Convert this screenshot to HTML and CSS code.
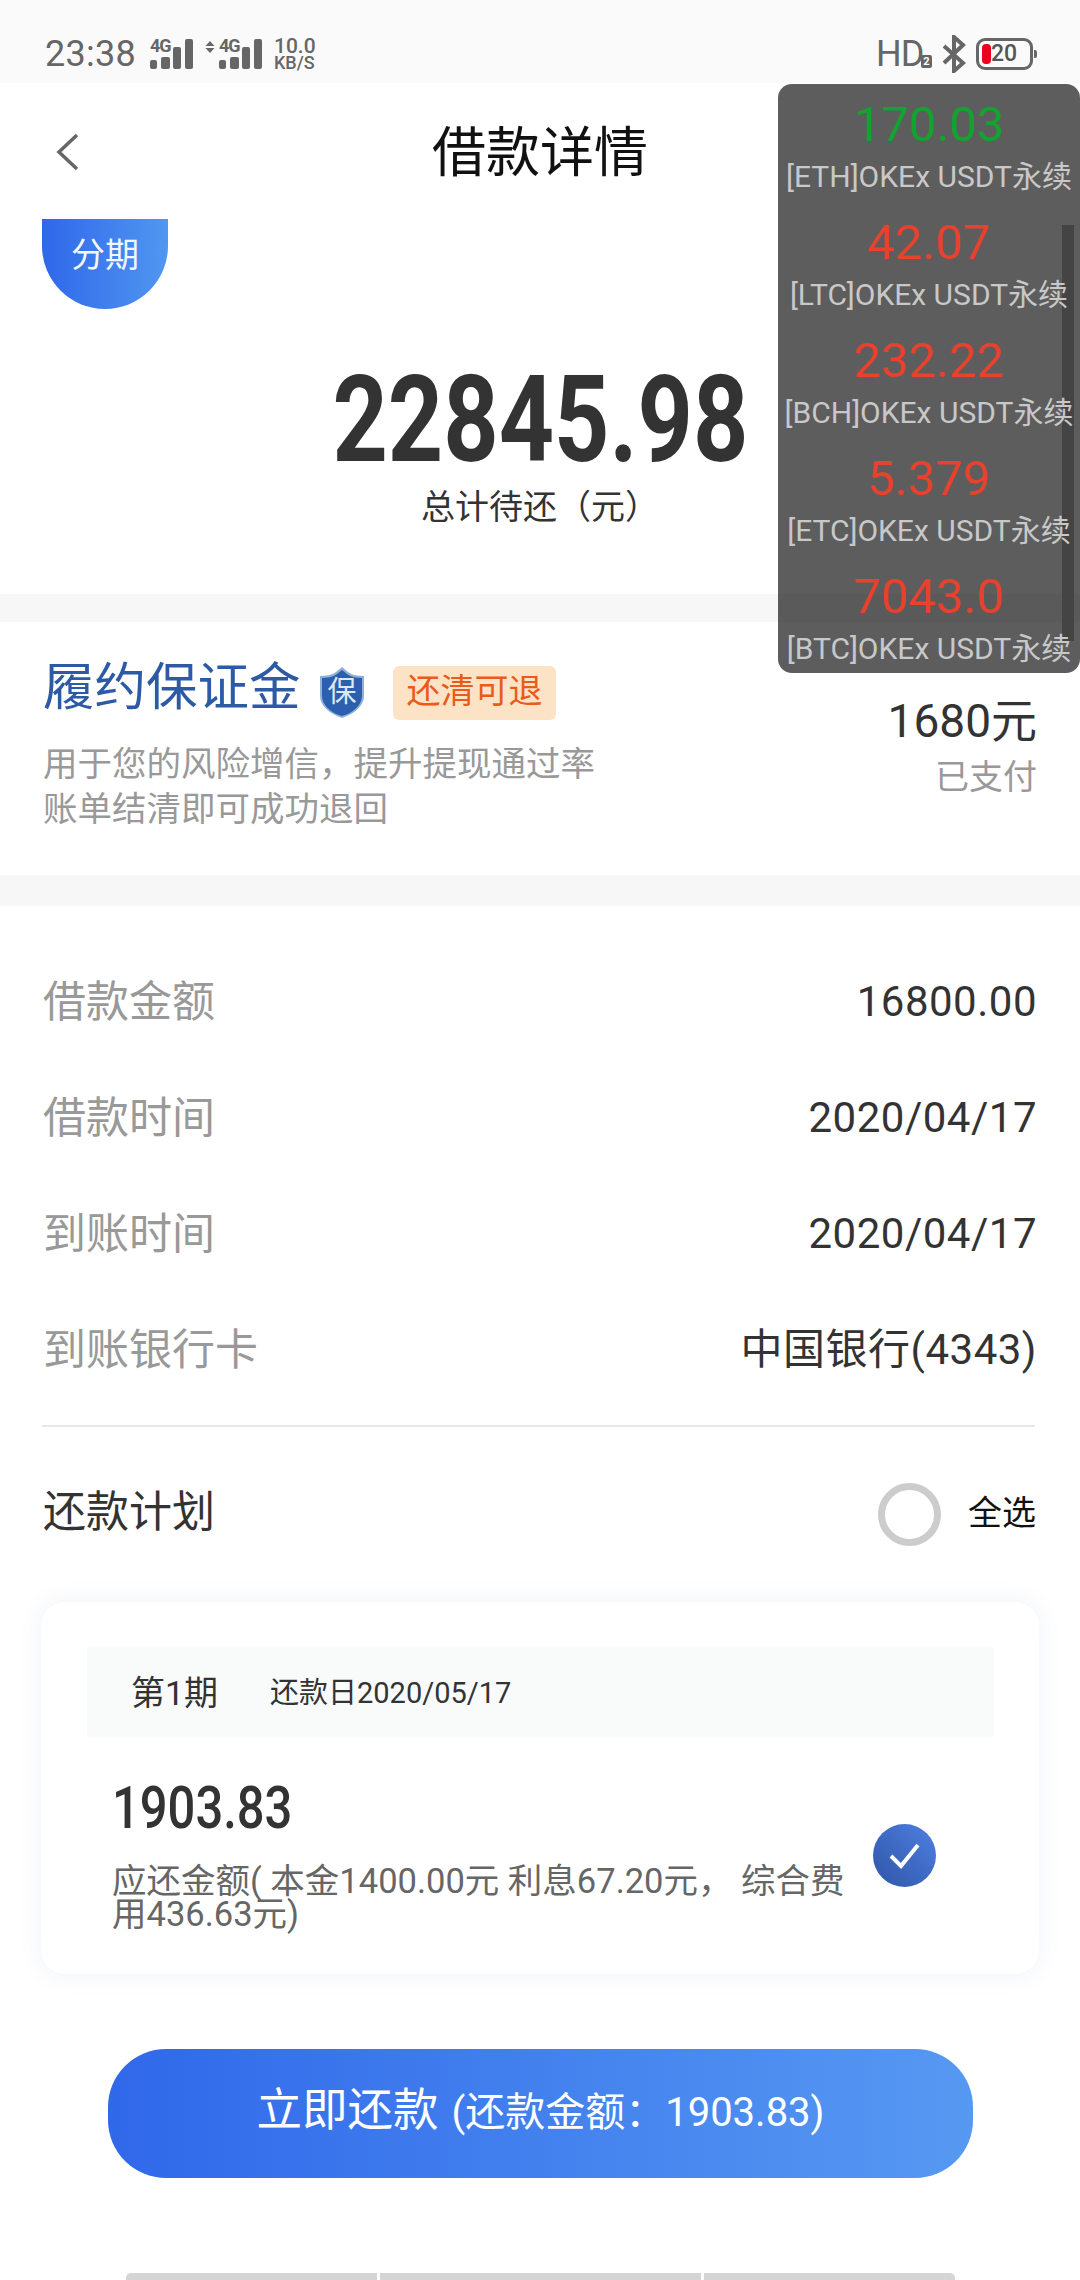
FILE: index.html
```html
<!DOCTYPE html>
<html lang="zh-CN">
<head>
<meta charset="utf-8">
<title>借款详情</title>
<link rel="stylesheet" href="styles.css">
</head>
<body>
<div class="page">
  <header class="status">
    <div class="status-left">
      <span class="time">23:38</span>
      <span class="sig"><span class="sig-g">4G</span>
        <svg class="bars" width="43" height="30" viewBox="0 0 43 30"><rect x="0" y="21" width="7" height="9" rx="2"/><rect x="11" y="18" width="9" height="12" rx="2"/><rect x="23" y="8" width="8" height="22" rx="2"/><rect x="35" y="0" width="8" height="30" rx="2"/></svg></span>
      <svg class="updown" width="10" height="12" viewBox="0 0 10 12"><path d="M5 0l4.500 5h-9zM5 12l4.500-5h-9z"/></svg>
      <span class="sig"><span class="sig-g">4G</span>
        <svg class="bars" width="43" height="30" viewBox="0 0 43 30"><rect x="0" y="21" width="7" height="9" rx="2"/><rect x="11" y="18" width="9" height="12" rx="2"/><rect x="23" y="8" width="8" height="22" rx="2"/><rect x="35" y="0" width="8" height="30" rx="2"/></svg></span>
      <span class="speed"><b>10.0</b><i>KB/S</i></span>
    </div>
    <div class="status-right">
      <span class="hd">HD<span class="hd-2">2</span></span>
      <svg class="bt" width="24" height="38" viewBox="0 0 24 38"><path d="M2 11l19 17-9 8V2l9 8L2 28" fill="none" stroke="#666" stroke-width="4"/></svg>
      <span class="battery"><span class="battery-fill"></span><span class="battery-num">20</span></span>
    </div>
  </header>

  <nav class="nav">
    <svg class="back" width="24" height="38" viewBox="0 0 24 38"><path d="M21 2L3 19l18 17" fill="none" stroke="#666" stroke-width="3.500"/></svg>
    <h1 class="title">借款详情</h1>
  </nav>

  <aside class="ticker">
    <div class="ticker-scroll"></div>
    <div class="ticker-row"><div class="ticker-val up">170.03</div><div class="ticker-name">[ETH]OKEx USDT永续</div></div>
    <div class="ticker-row"><div class="ticker-val down">42.07</div><div class="ticker-name">[LTC]OKEx USDT永续</div></div>
    <div class="ticker-row"><div class="ticker-val down">232.22</div><div class="ticker-name">[BCH]OKEx USDT永续</div></div>
    <div class="ticker-row"><div class="ticker-val down">5.379</div><div class="ticker-name">[ETC]OKEx USDT永续</div></div>
    <div class="ticker-row"><div class="ticker-val down">7043.0</div><div class="ticker-name">[BTC]OKEx USDT永续</div></div>
  </aside>

  <section class="summary">
    <div class="badge">分期</div>
    <div class="total"><span class="total-num">22845.98</span></div>
    <div class="total-label">总计待还（元）</div>
  </section>

  <div class="band band-a"></div>

  <section class="deposit">
    <div class="deposit-main">
      <div class="deposit-head">
        <span class="deposit-title">履约保证金</span>
        <svg class="shield" width="46" height="53" viewBox="0 0 46 53"><path d="M23 1l6 5c4 3 10 4 16 4v20c0 10-10 18-22 22C11 48 1 40 1 30V10c6 0 12-1 16-4z" fill="#8fb0dc"/><path d="M23 4l5 4c4 3 10 4 15 4v18c0 9-9 17-20 20C12 47 3 39 3 30V12c5 0 11-1 15-4z" fill="#2c5fae"/><text x="23" y="36" text-anchor="middle" class="shield-text">保</text></svg>
        <span class="deposit-tag">还清可退</span>
      </div>
      <p class="deposit-desc">用于您的风险增信，提升提现通过率<br>账单结清即可成功退回</p>
    </div>
    <div class="deposit-side">
      <div class="deposit-amount">1680元</div>
      <div class="deposit-state">已支付</div>
    </div>
  </section>

  <div class="band band-b"></div>

  <section class="details">
    <div class="row"><span class="row-label">借款金额</span><span class="row-value">16800.00</span></div>
    <div class="row"><span class="row-label">借款时间</span><span class="row-value">2020/04/17</span></div>
    <div class="row"><span class="row-label">到账时间</span><span class="row-value">2020/04/17</span></div>
    <div class="row"><span class="row-label">到账银行卡</span><span class="row-value">中国银行(4343)</span></div>
    <div class="divider"></div>
    <div class="plan">
      <span class="plan-title">还款计划</span>
      <span class="plan-all"><span class="radio"></span><span class="plan-all-text">全选</span></span>
    </div>
    <div class="card">
      <div class="card-head"><span class="period">第1期</span><span class="due">还款日2020/05/17</span></div>
      <div class="card-body">
        <div class="card-info">
          <div class="card-amount"><span class="card-num">1903.83</span></div>
          <p class="card-desc">应还金额( 本金1400.00元 利息67.20元， 综合费用436.63元)</p>
        </div>
        <svg class="check" width="63" height="63" viewBox="0 0 63 63"><defs><linearGradient id="cg" x1="0" y1="1" x2="1" y2="0"><stop offset="0" stop-color="#2f56a8"/><stop offset="1" stop-color="#4f7fe0"/></linearGradient></defs><circle cx="31.500" cy="31.500" r="31.500" fill="url(#cg)"/><path d="M18 32l10 10 17-21" fill="none" stroke="#fff" stroke-width="4"/></svg>
      </div>
    </div>
    <button class="pay"><span class="pay-main">立即还款</span><span class="pay-sub">(还款金额：1903.83)</span></button>
  </section>

  <div class="nav-hint"><span class="hint h1"></span><span class="hint h2"></span><span class="hint h3"></span></div>
</div>
</body>
</html>
```
FILE: styles.css
```css
* { box-sizing: border-box; }
html, body { margin: 0; padding: 0; background: #fff; }
body { font-family: Roboto, "Noto Sans CJK SC", sans-serif; color: #333; }
.page { position: relative; width: 1080px; height: 2280px; overflow: hidden; display: flex; flex-direction: column; }

/* status bar */
.status { height: 83px; flex: none; background: #fafafa; display: flex; justify-content: space-between; align-items: center; padding: 25px 45px 0 45px; color: #666; }
.status-left, .status-right { display: flex; align-items: center; }
.time { font-size: 36px; line-height: 40px; width: 105px; letter-spacing: .3px; }
.sig { position: relative; display: block; width: 43px; height: 30px; }
.sig-g { position: absolute; left: 0; top: -2px; font-size: 18px; line-height: 18px; font-weight: 700; letter-spacing: -1px; }
.bars { display: block; fill: #666; }
.updown { fill: #666; margin: 0 4px 14px 12px; display: block; }
.speed { display: flex; flex-direction: column; margin-left: 12px; width: 42px; color: #666; }
.speed b { font-size: 21px; line-height: 17px; font-weight: 500; }
.speed i { font-size: 18px; line-height: 15px; font-style: normal; font-weight: 500; }
.hd { font-size: 36px; line-height: 40px; width: 66px; color: #666; position: relative; letter-spacing: -1px; }
.hd-2 { position: absolute; left: 45px; bottom: 6px; width: 11px; height: 13px; background: #666; color: #fff; font-size: 11px; line-height: 13px; text-align: center; font-weight: 700; border-radius: 2px; letter-spacing: 0; }
.bt { display: block; margin-right: 10px; }
.battery { position: relative; display: flex; align-items: center; width: 57px; height: 32px; border: 3px solid #666; border-radius: 9px; padding-left: 3px; margin-right: 2px; }
.battery::after { content: ""; position: absolute; right: -7px; top: 9px; width: 3px; height: 8px; background: #666; border-radius: 0 2px 2px 0; }
.battery-fill { width: 9px; height: 20px; background: #e8001c; border-radius: 4px; }
.battery-num { font-size: 23px; line-height: 26px; font-weight: 500; color: #555; margin-left: 0; }

/* nav */
.nav { height: 136px; flex: none; position: relative; display: flex; align-items: center; justify-content: center; padding-top: 6px; }
.back { position: absolute; left: 56px; top: 50px; display: block; }
.title { margin: 0; font-size: 54px; line-height: 70px; font-weight: 400; color: #111; }

/* overlay ticker */
.ticker { position: absolute; left: 778px; top: 84px; width: 302px; height: 589px; padding-top: 10px; background: rgba(0,0,0,.635); border-radius: 14px; z-index: 5; }
.ticker-scroll { position: absolute; left: 284px; top: 141px; width: 12px; height: 416px; background: #444; }
.ticker-row { position: relative; height: 118px; text-align: center; }
.ticker-val { font-size: 49px; line-height: 60px; height: 60px; padding-top: 1px; }
.ticker-val.up { color: #11a52f; }
.ticker-val.down { color: #e8412d; }
.ticker-name { font-size: 30px; line-height: 40px; height: 40px; padding-top: 3px; color: #c8c8c8; white-space: nowrap; }

/* summary */
.summary { height: 375px; flex: none; padding-left: 42px; }
.badge { width: 126px; height: 90px; border-radius: 0 0 63px 63px; background: linear-gradient(90deg, #2f67ea, #5097f0); color: #f2f6ff; font-size: 34px; line-height: 72px; text-align: center; }
.total { width: 996px; height: 144px; text-align: center; margin-top: 39px; line-height: 144px; }
.total-num { display: inline-block; font-size: 120px; font-weight: 700; line-height: 144px; color: #333; transform: scaleX(.805); }
.total-label { width: 996px; margin-top: -7px; text-align: center; font-size: 34px; line-height: 44px; color: #333; }

.band { flex: none; background: #f7f7f7; }
.band-a { height: 28px; }
.band-b { height: 31px; }

/* deposit */
.deposit { flex: none; height: 253px; padding: 0 43px 0 43px; display: flex; justify-content: space-between; }
.deposit-head { display: flex; align-items: center; height: 54px; margin-top: 44px; }
.deposit-title { font-size: 51.500px; line-height: 54px; color: #2c5aa5; width: 276px; margin-top: -10px; }
.shield { display: block; margin-top: -2px; }
.shield-text { font-size: 29px; fill: #dce8f8; }
.deposit-tag { margin-left: 28px; width: 163px; height: 54px; background: #fde3c6; border-radius: 6px; color: #ea5a1b; font-size: 34px; line-height: 50px; text-align: center; }
.deposit-desc { margin: 22px 0 0; font-size: 34.500px; line-height: 45px; color: #999; }
.deposit-side { padding-top: 73px; text-align: right; }
.deposit-amount { font-size: 46px; line-height: 52px; color: #333; }
.deposit-state { font-size: 34px; line-height: 46px; color: #999; padding-top: 7px; }

/* details */
.details { flex: 1; padding: 38px 0 0 0; display: flex; flex-direction: column; align-items: stretch; }
.row { height: 116px; padding: 0 43px 0 43px; display: flex; justify-content: space-between; align-items: center; }
.row-label { font-size: 43px; line-height: 60px; color: #999; }
.row-value { font-size: 42px; line-height: 60px; color: #333; letter-spacing: .5px; }
.divider { height: 2px; margin: 17px 45px 0 42px; background: #e6e6e6; flex: none; }
.plan { flex: none; height: 175px; padding: 0 44px 6px 43px; display: flex; align-items: center; justify-content: space-between; }
.plan-title { font-size: 43px; line-height: 60px; color: #333; }
.plan-all { display: flex; align-items: center; }
.radio { width: 63px; height: 63px; border: 7px solid #ccc; border-radius: 50%; margin-right: 27px; position: relative; top: 3px; }
.plan-all-text { font-size: 34px; line-height: 44px; color: #111; position: relative; top: 1px; }

/* card */
.card { flex: none; width: 998px; height: 372px; margin-left: 41px; padding: 45px 45px 0 46px; background: #fff; border-radius: 24px; box-shadow: 0 0 24px rgba(90,110,180,.09); }
.card-head { height: 90px; background: #f9fafa; display: flex; align-items: center; padding: 2px 0 0 44px; }
.period { font-size: 34px; line-height: 44px; color: #333; width: 139px; }
.due { font-size: 29px; line-height: 44px; color: #333; }
.card-body { display: flex; justify-content: space-between; padding: 0 58px 0 25px; }
.card-info { width: 740px; }
.card-amount { height: 70px; margin-top: 36px; line-height: 70px; }
.card-num { display: inline-block; font-size: 60px; font-weight: 500; line-height: 70px; color: #333; transform: scaleX(.815); transform-origin: left center; }
.card-desc { margin: 22px 0 0; font-size: 34.500px; line-height: 33px; color: #666; width: 740px; }
.check { display: block; margin-top: 87px; flex: none; }

/* button */
.pay { flex: none; display: block; width: 865px; height: 129px; margin: 75px 0 0 108px; border: 0; padding: 0 0 3px; border-radius: 58px; background: linear-gradient(90deg, #3068ea, #5699f2); color: #fff; font-family: inherit; text-align: center; }
.pay-main { font-size: 45.500px; line-height: 60px; margin-right: 13px; }
.pay-sub { font-size: 40px; line-height: 60px; }

/* gesture hints */
.nav-hint { position: absolute; left: 126px; bottom: 0; display: flex; gap: 3px; height: 7px; }
.hint { display: block; height: 7px; background: #d5d5d5; }
.h1 { width: 251px; border-radius: 5px 0 0 0; }
.h2 { width: 321px; }
.h3 { width: 251px; border-radius: 0 5px 0 0; }
```
